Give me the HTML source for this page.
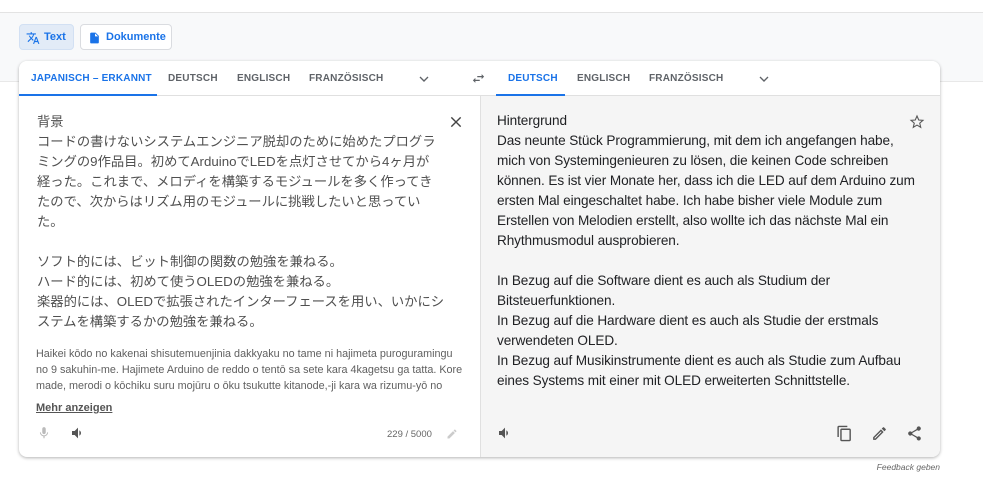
<!DOCTYPE html>
<html><head><meta charset="utf-8"><style>
*{box-sizing:border-box;margin:0;padding:0}
body{width:983px;height:500px;background:#fff;font-family:"Liberation Sans","Noto Sans CJK JP",sans-serif;position:relative;overflow:hidden}
.topband{position:absolute;left:0;top:12px;width:983px;height:70px;background:#f8f9fa;border-top:1px solid #e3e3e3;border-bottom:1px solid #e8e8e8}
.btn{position:absolute;top:24px;height:26px;border-radius:4px;font-size:11px;font-weight:bold;color:#1a73e8;display:flex;align-items:center}
.card{position:absolute;left:19px;top:61px;width:921px;height:396px;background:#fff;border-radius:8px;box-shadow:0 1px 3px rgba(0,0,0,.3);overflow:hidden}
.tabs{position:absolute;top:0;left:0;width:921px;height:35px;border-bottom:1px solid #e0e0e0;background:#fff}
.tab{position:absolute;top:12px;font-size:10px;font-weight:bold;color:#5f6368;letter-spacing:.2px}
.tab.a{color:#1a73e8}
.ul{position:absolute;top:33px;height:2px;background:#1a73e8}
.right{position:absolute;left:461px;top:35px;width:460px;height:361px;background:#f5f5f5;border-left:1px solid #e0e0e0}
.jp{position:absolute;left:18px;top:51px;font-size:13.3px;line-height:20px;color:#505050;white-space:nowrap}
.de{position:absolute;left:16px;top:15px;font-size:13.6px;line-height:20px;color:#202124;white-space:nowrap;letter-spacing:-0.1px}
.rom{position:absolute;left:17px;top:285px;font-size:10.8px;line-height:16px;color:#606060;white-space:nowrap}
svg{position:absolute}
</style></head><body>
<div class="topband"></div>
<div class="btn" style="left:19px;width:55px;background:#e2ebf7;border:1px solid #d2e0f3">
<svg style="left:6px;top:6px" width="14" height="14" viewBox="0 0 24 24"><path fill="#1a73e8" d="M12.87 15.07l-2.54-2.51.03-.03A17.5 17.5 0 0014.07 6H17V4h-7V2H8v2H1v2h11.17C11.5 7.92 10.44 9.75 9 11.35 8.07 10.32 7.3 9.19 6.69 8h-2c.73 1.63 1.73 3.17 2.98 4.56l-5.09 5.02L4 19l5-5 3.11 3.11.76-2.04zM18.5 10h-2L12 22h2l1.12-3h4.75L21 22h2l-4.5-12zm-2.62 7l1.62-4.33L19.12 17h-3.24z"/></svg>
<span style="margin-left:24px">Text</span></div>
<div class="btn" style="left:80px;width:92px;background:#fff;border:1px solid #dadce0">
<svg style="left:7px;top:6px" width="13" height="14" viewBox="0 0 24 24"><path fill="#1a73e8" d="M14 2H6c-1.1 0-2 .9-2 2v16c0 1.1.9 2 2 2h12c1.1 0 2-.9 2-2V8l-6-6zm-1 7V3.5L18.5 9H13z"/></svg>
<span style="margin-left:25px">Dokumente</span></div>
<div class="card">
<div class="tabs">
<span class="tab a" style="left:12px">JAPANISCH – ERKANNT</span>
<div class="ul" style="left:0;width:138px"></div>
<span class="tab" style="left:149px">DEUTSCH</span>
<span class="tab" style="left:218px">ENGLISCH</span>
<span class="tab" style="left:290px">FRANZÖSISCH</span>
<svg style="left:397px;top:10px" width="16" height="16" viewBox="0 0 24 24"><path fill="none" stroke="#5f6368" stroke-width="2" d="M6 9l6 6 6-6"/></svg>
<svg style="left:452px;top:10px" width="15" height="15" viewBox="0 0 24 24"><path fill="#5f6368" d="M6.99 11L3 15l3.99 4v-3H14v-2H6.99v-3zM21 9l-3.99-4v3H10v2h7.01v3L21 9z"/></svg>
<span class="tab a" style="left:489px">DEUTSCH</span>
<div class="ul" style="left:477px;width:69px"></div>
<span class="tab" style="left:558px">ENGLISCH</span>
<span class="tab" style="left:630px">FRANZÖSISCH</span>
<svg style="left:737px;top:10px" width="16" height="16" viewBox="0 0 24 24"><path fill="none" stroke="#5f6368" stroke-width="2" d="M6 9l6 6 6-6"/></svg>
</div>
<div class="jp">背景<br>コードの書けないシステムエンジニア脱却のために始めたプログラ<br>ミングの9作品目。初めてArduinoでLEDを点灯させてから4ヶ月が<br>経った。これまで、メロディを構築するモジュールを多く作ってき<br>たので、次からはリズム用のモジュールに挑戦したいと思ってい<br>た。<br><br>ソフト的には、ビット制御の関数の勉強を兼ねる。<br>ハード的には、初めて使うOLEDの勉強を兼ねる。<br>楽器的には、OLEDで拡張されたインターフェースを用い、いかにシ<br>ステムを構築するかの勉強を兼ねる。</div>
<svg style="left:430px;top:54px" width="14" height="14" viewBox="0 0 24 24"><path stroke="#444" stroke-width="2.4" d="M4 4l16 16M20 4L4 20"/></svg>
<div class="rom">Haikei kōdo no kakenai shisutemuenjinia dakkyaku no tame ni hajimeta puroguramingu<br>no 9 sakuhin-me. Hajimete Arduino de reddo o tentō sa sete kara 4kagetsu ga tatta. Kore<br>made, merodi o kōchiku suru mojūru o ōku tsukutte kitanode,-ji kara wa rizumu-yō no</div>
<div style="position:absolute;left:17px;top:341px;font-size:11px;font-weight:bold;color:#555;text-decoration:underline">Mehr anzeigen</div>
<svg style="left:18px;top:364px" width="14" height="16" viewBox="0 0 24 24"><path fill="#bbb" d="M12 14c1.66 0 3-1.34 3-3V5c0-1.66-1.34-3-3-3S9 3.34 9 5v6c0 1.66 1.34 3 3 3zm5.3-3c0 3-2.54 5.1-5.3 5.1S6.7 14 6.7 11H5c0 3.41 2.72 6.23 6 6.72V21h2v-3.28c3.28-.48 6-3.3 6-6.72h-1.7z"/></svg>
<svg style="left:51px;top:364px" width="16" height="16" viewBox="0 0 24 24"><path fill="#555" d="M3 9v6h4l5 5V4L7 9H3zm13.5 3A4.5 4.5 0 0014 7.97v8.05c1.48-.73 2.5-2.25 2.5-4.02z"/></svg>
<div style="position:absolute;left:368px;top:368px;font-size:9.5px;color:#666">229 / 5000</div>
<svg style="left:427px;top:367px" width="12" height="12" viewBox="0 0 24 24"><path fill="#ccc" d="M3 17.25V21h3.75L17.81 9.94l-3.75-3.75L3 17.25zM20.71 7.04a1 1 0 000-1.41l-2.34-2.34a1 1 0 00-1.41 0l-1.83 1.83 3.75 3.75 1.83-1.83z"/></svg>
<div class="right">
<div class="de">Hintergrund<br>Das neunte Stück Programmierung, mit dem ich angefangen habe,<br>mich von Systemingenieuren zu lösen, die keinen Code schreiben<br>können. Es ist vier Monate her, dass ich die LED auf dem Arduino zum<br>ersten Mal eingeschaltet habe. Ich habe bisher viele Module zum<br>Erstellen von Melodien erstellt, also wollte ich das nächste Mal ein<br>Rhythmusmodul ausprobieren.<br><br>In Bezug auf die Software dient es auch als Studium der<br>Bitsteuerfunktionen.<br>In Bezug auf die Hardware dient es auch als Studie der erstmals<br>verwendeten OLED.<br>In Bezug auf Musikinstrumente dient es auch als Studie zum Aufbau<br>eines Systems mit einer mit OLED erweiterten Schnittstelle.</div>
<svg style="left:428px;top:18px" width="16" height="16" viewBox="0 0 24 24"><path fill="none" stroke="#555" stroke-width="1.6" d="M12 3l2.6 6 6.4.5-4.9 4.2 1.5 6.3L12 16.6 6.4 20l1.5-6.3L3 9.5 9.4 9z"/></svg>
<svg style="left:16px;top:329px" width="16" height="16" viewBox="0 0 24 24"><path fill="#555" d="M3 9v6h4l5 5V4L7 9H3zm13.5 3A4.5 4.5 0 0014 7.97v8.05c1.48-.73 2.5-2.25 2.5-4.02z"/></svg>
<svg style="left:355px;top:329px" width="17" height="17" viewBox="0 0 24 24"><path fill="#555" d="M16 1H4c-1.1 0-2 .9-2 2v14h2V3h12V1zm3 4H8c-1.1 0-2 .9-2 2v14c0 1.1.9 2 2 2h11c1.1 0 2-.9 2-2V7c0-1.1-.9-2-2-2zm0 16H8V7h11v14z"/></svg>
<svg style="left:390px;top:329px" width="17" height="17" viewBox="0 0 24 24"><path fill="#555" d="M3 17.25V21h3.75L17.81 9.94l-3.75-3.75L3 17.25zM5.92 19H5v-.92l9.06-9.06.92.92L5.92 19zM20.71 5.63l-2.34-2.34a1 1 0 00-1.41 0l-1.83 1.83 3.75 3.75 1.83-1.83a1 1 0 000-1.41z"/></svg>
<svg style="left:425px;top:329px" width="17" height="17" viewBox="0 0 24 24"><path fill="#555" d="M18 16.08c-.76 0-1.44.3-1.96.77L8.91 12.7c.05-.23.09-.46.09-.7s-.04-.47-.09-.7l7.05-4.11A2.99 2.99 0 0021 5a3 3 0 10-5.91.7L8.04 9.81A3 3 0 003 12a3 3 0 005.04 2.19l7.12 4.16c-.05.21-.08.43-.08.65A2.92 2.92 0 1018 16.08z"/></svg>
</div>
</div>
<div style="position:absolute;right:43px;top:462px;font-size:8.5px;font-style:italic;color:#666">Feedback geben</div>
</body></html>
